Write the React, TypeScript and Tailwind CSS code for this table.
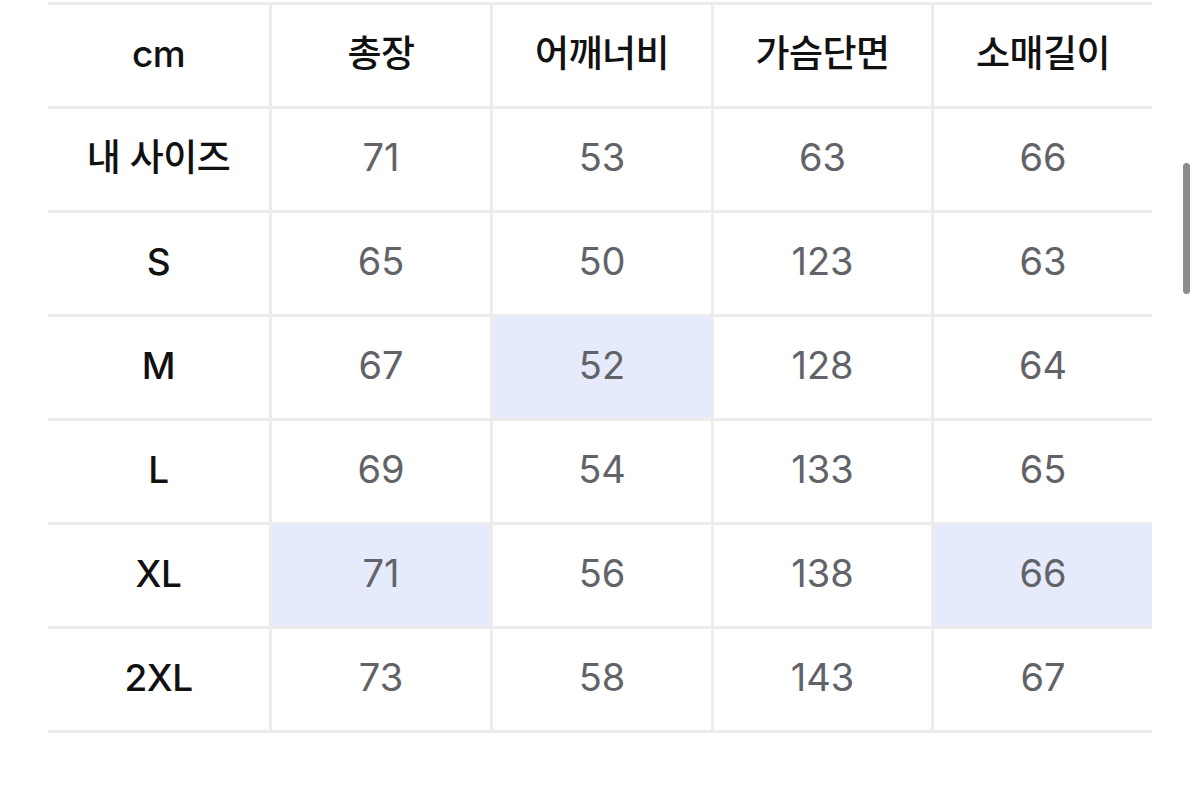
import React from "react";

const headers = ["cm", "총장", "어깨너비", "가슴단면", "소매길이"];
const rows: { label: string; values: string[]; hl: number[] }[] = [
  { label: "내 사이즈", values: ["71", "53", "63", "66"], hl: [] },
  { label: "S", values: ["65", "50", "123", "63"], hl: [] },
  { label: "M", values: ["67", "52", "128", "64"], hl: [1] },
  { label: "L", values: ["69", "54", "133", "65"], hl: [] },
  { label: "XL", values: ["71", "56", "138", "66"], hl: [0, 3] },
  { label: "2XL", values: ["73", "58", "143", "67"], hl: [] },
];

const font = { fontFamily: '"Inter", "Noto Sans CJK KR", sans-serif' };

export default function App() {
  return (
    <div className="relative w-[1200px] h-[798px] bg-white overflow-hidden" style={font}>
      <div className="pt-[2px] pl-[48px]">
        <div className="w-[1104px] grid grid-cols-[221px_218px_218px_217px_218px] gap-[3px] py-[3px] bg-[#ececec]">
          {headers.map((h) => (
            <div
              key={h}
              className="h-[101px] pb-[4px] bg-white flex items-center justify-center text-[37px] font-medium text-[#111] tracking-[-0.5px]"
            >
              {h}
            </div>
          ))}
          {rows.map((r) => (
            <React.Fragment key={r.label}>
              <div className="h-[101px] pb-[4px] bg-white flex items-center justify-center text-[37px] font-medium text-[#111] tracking-[-0.5px]">
                {r.label}
              </div>
              {r.values.map((v, i) => (
                <div
                  key={i}
                  className={
                    r.hl.includes(i)
                      ? "h-[101px] pb-[4px] bg-[#e5ebfb] flex items-center justify-center text-[38px] text-[#626368]"
                      : "h-[101px] pb-[4px] bg-white flex items-center justify-center text-[38px] text-[#626368]"
                  }
                >
                  {v}
                </div>
              ))}
            </React.Fragment>
          ))}
        </div>
      </div>
      <div className="absolute left-[1183px] top-[163px] w-[7px] h-[131px] rounded-full bg-[#8c8c8c]" />
    </div>
  );
}
